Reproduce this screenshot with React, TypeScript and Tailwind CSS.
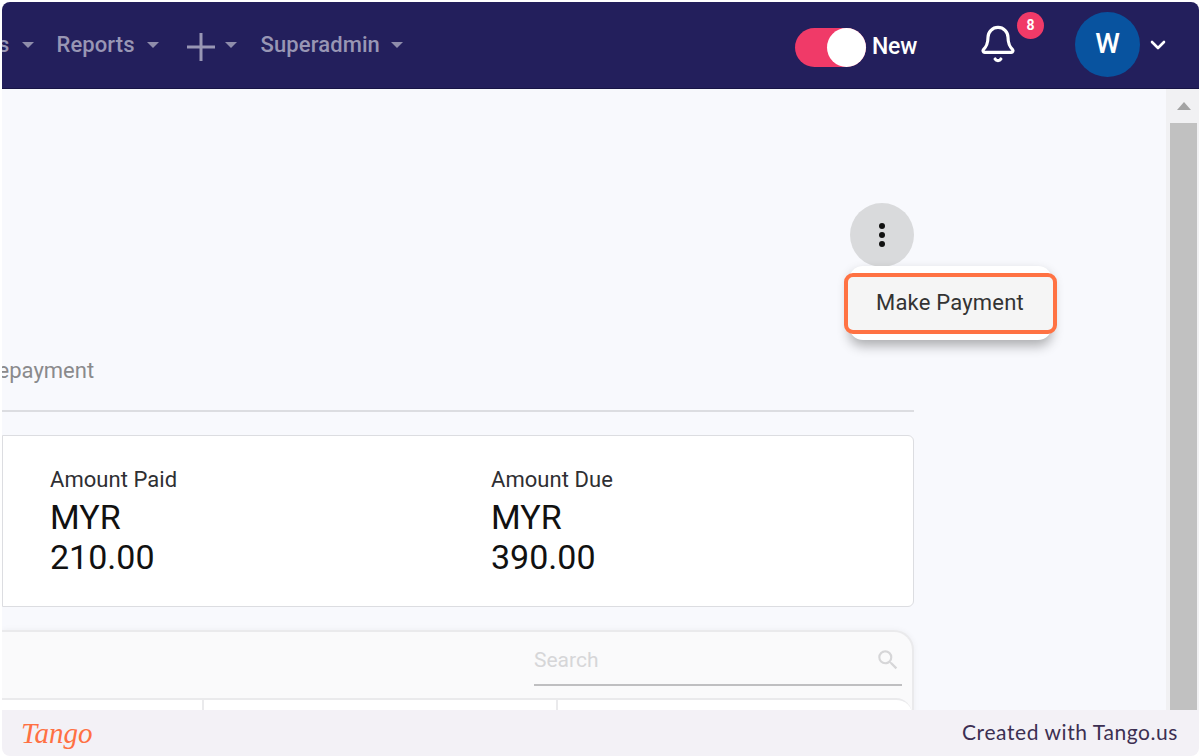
import React from 'react';
import { Bell, ChevronDown } from 'lucide-react';
import { MdSearch } from 'react-icons/md';

const Caret = ({ className = '' }: { className?: string }) => (
  <span className={`inline-block w-0 h-0 border-x-[6px] border-x-transparent border-t-[6px] border-t-[#8f8dab] ${className}`} />
);

function NavBar() {
  return (
    <header className="h-[87px] shrink-0 bg-[#231f5c] rounded-t-[8px] border-b border-[#171445] flex items-center overflow-hidden font-['Roboto',sans-serif]">
      <div className="flex items-center -mt-[1px] text-[22px] font-medium text-[#9896b4] tracking-[0.1px]">
        <span className="-ml-[4px]">s</span>
        <Caret className="ml-[13px]" />
        <span className="ml-[22px]">Reports</span>
        <Caret className="ml-[12px]" />
        <svg width="28" height="28" viewBox="0 0 28 28" className="ml-[28px] mt-[5px] text-[#9896b4]">
          <path d="M0 14H28M14 0V28" stroke="currentColor" strokeWidth="3" />
        </svg>
        <Caret className="ml-[10px]" />
        <span className="ml-[24px]">Superadmin</span>
        <Caret className="ml-[11px]" />
      </div>

      <div className="ml-auto flex items-center">
        <div className="w-[71px] h-[39px] mt-[5px] rounded-full bg-[#f03a68] relative">
          <span className="absolute right-0 top-0 w-[39px] h-[39px] rounded-full bg-white" />
        </div>
        <span className="ml-[6px] mt-[5px] text-[23px] font-medium text-white tracking-[-0.2px]">New</span>
        <div className="relative ml-[61px] -mt-[2px]">
          <Bell size={40} strokeWidth={1.9} className="text-white" />
          <span className="absolute -top-[12px] left-[39px] w-[27px] h-[27px] rounded-full bg-[#f03a68] text-white text-[14px] font-bold flex items-center justify-center">8</span>
        </div>
        <div className="ml-[57px] -mt-[2px] w-[65px] h-[65px] rounded-full bg-[#08539f] flex items-center justify-center text-white text-[28px] font-medium">W</div>
        <ChevronDown size={24} strokeWidth={2.6} className="ml-[6px] mr-[29px] text-white" />
      </div>
    </header>
  );
}

function Stat({ label, value }: { label: string; value: string }) {
  return (
    <div className="w-[441px] shrink-0">
      <div className="text-[22px] leading-[28px] text-[#2f2f33] tracking-[0.05px]">{label}</div>
      <div className="text-[34px] leading-[40px] text-[#111] mt-[3px]">MYR<br />{value}</div>
    </div>
  );
}

function Content() {
  return (
    <div className="flex-1 min-h-0 flex overflow-hidden font-['Roboto',sans-serif]">
      <main className="flex-1 min-w-0 overflow-hidden bg-[#f8f9fd]">
        <div className="w-[912px] flex flex-col">
          <div className="h-[114px] flex justify-end">
            <button className="w-[64px] h-[64px] mt-[114px] rounded-full bg-[#d9dadc] flex flex-col items-center justify-center gap-[3px]">
              <span className="w-[6px] h-[6px] rounded-full bg-[#111]" />
              <span className="w-[6px] h-[6px] rounded-full bg-[#111]" />
              <span className="w-[6px] h-[6px] rounded-full bg-[#111]" />
            </button>
          </div>

          <div className="h-[209px] pt-[154px] border-b-2 border-[#dcdde1] text-[22px] leading-[28px] text-[#8a8a8c] whitespace-nowrap overflow-hidden">
            <span className="block -ml-[18px]">Repayment</span>
          </div>

          <div className="mt-[23px] h-[172px] bg-white border border-[#dcdde1] rounded-r-[6px] flex pt-[30px] pl-[47px]">
            <Stat label="Amount Paid" value="210.00" />
            <Stat label="Amount Due" value="390.00" />
          </div>

          <div className="mt-[23px] h-[90px] bg-[#fafafb] border-2 border-[#eaeaec] border-l-0 rounded-tr-[20px] shadow-[0_0_6px_rgba(0,0,0,0.05)] flex flex-col">
            <div className="h-[66px] flex justify-end pr-[10px] shrink-0">
              <div className="w-[368px] h-[54px] border-b-2 border-[#bfbfc1] flex items-center justify-between text-[21px] text-[#d6d6d8] pt-[5px] pr-[1px]">
                <span>Search</span>
                <MdSearch size={26} className="text-[#d6d6d8] -mt-[2px]" />
              </div>
            </div>
            <div className="flex-1 flex bg-white border-t-2 border-[#eaeaec] rounded-tr-[16px]">
              <div className="w-[202px] border-r-2 border-[#eaeaec]" />
              <div className="w-[354px] border-r-2 border-[#eaeaec]" />
            </div>
          </div>
        </div>
      </main>

      <aside className="w-[33px] shrink-0 bg-[#f1f1f3] flex flex-col pl-[4px] pr-[2px]">
        <div className="h-[34px] flex items-center justify-center shrink-0">
          <span className="w-0 h-0 border-x-[7px] border-x-transparent border-b-[8px] border-b-[#a3a3a3]" />
        </div>
        <div className="flex-1 bg-[#c1c1c1]" />
      </aside>
    </div>
  );
}

export default function App() {
  return (
    <div className="relative w-[1200px] h-[756px] bg-white pl-[2px] pt-[2px] pr-[1px] flex flex-col overflow-hidden">
      <NavBar />
      <Content />
      <footer className="h-[46px] shrink-0 bg-[#f3f1f6] rounded-b-[8px] flex items-center justify-between pl-[19px] pr-[21px]">
        <span className="font-['Liberation_Serif',serif] italic text-[29px] leading-none text-[#ff7043]">Tango</span>
        <span className="font-['Lato',sans-serif] text-[21px] tracking-[0.57px] text-[#3c2f52] pb-[2px]">Created with Tango.us</span>
      </footer>

      {/* popup menu over the page */}
      <div className="absolute left-[849px] top-[266px] w-[203px] h-[74px] rounded-[14px] bg-white shadow-[0_6px_12px_rgba(0,0,0,0.3)]" />
      <div className="absolute left-[844px] top-[273px] w-[213px] h-[61px] rounded-[9px] bg-[#f5f5f5] border-[4px] border-[#ff7243] flex items-center justify-center font-['Roboto',sans-serif] text-[22px] tracking-[0.2px] text-[#333] pb-[2px] pr-[1px]">
        Make Payment
      </div>
    </div>
  );
}
